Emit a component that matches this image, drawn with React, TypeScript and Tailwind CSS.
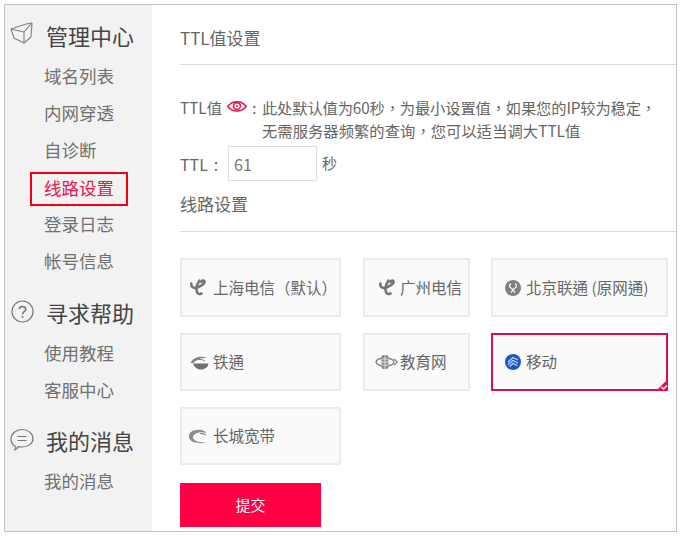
function CubeIcon() {
  return (
    <svg width="24" height="24" viewBox="0 0 24 24" fill="none" stroke="#808080" strokeWidth="1.1" strokeLinejoin="round">
      <path d="M1 7 L16 2 L22 1 L21 15 L14 21 L4 16 Z" />
      <path d="M1 7 L14 10 L22 1 M14 10 L14 21" />
    </svg>
  );
}

function HelpIcon() {
  return (
    <svg width="23" height="23" viewBox="0 0 24 24" fill="none" stroke="#777" strokeWidth="1.2">
      <circle cx="12" cy="12" r="11" />
      <path d="M8.6 9.4 C8.8 5.8 15.4 5.8 15.4 9.6 C15.4 12.2 12 12.2 12 15" strokeWidth="1.6" />
      <circle cx="12" cy="17.8" r="1" fill="#777" stroke="none" />
    </svg>
  );
}

function ChatIcon() {
  return (
    <svg width="24" height="24" viewBox="0 0 24 24" fill="none" stroke="#777" strokeWidth="1.2" strokeLinejoin="round">
      <path d="M6 20 C2.5 18 1 15 1 12 C1 6.5 6 2.5 12 2.5 C18 2.5 23 6.5 23 11.5 C23 16.5 18 20 12 20 C10.5 20 9.5 20 8.5 19.6 C7.8 21 6.5 22.5 4.5 23 C5.5 22 6 21 6 20 Z" />
      <path d="M7.5 9.5 H16.5 M7.5 13.5 H16.5" />
    </svg>
  );
}

function EyeIcon() {
  return (
    <svg width="20" height="13" viewBox="0 0 20 13" fill="none" stroke="#e8174f" className="shrink-0">
      <path d="M0.8 6.5 C5 0 15 0 19.2 6.5 C15 12.5 5 12.5 0.8 6.5 Z" strokeWidth="1.5" />
      <circle cx="10" cy="6" r="3.4" strokeWidth="1.6" />
      <circle cx="10" cy="6" r="1" fill="#e8174f" stroke="none" />
    </svg>
  );
}

function TelecomIcon() {
  return (
    <svg width="16" height="17" viewBox="0 0 16 17" fill="none" stroke="#757575" strokeLinecap="round" className="shrink-0">
      <path d="M1.3 4.5 C0.8 8.5 4 9.8 8 8.2 C12 6.6 15 4.8 14.5 2.6 C14 1 12 1.5 11.5 3" strokeWidth="2.6" />
      <path d="M9.5 1.5 C7 5 6 10 7 13 C7.5 15 9.5 15.5 11.5 14.5" strokeWidth="2.6" />
    </svg>
  );
}

function UnicomIcon() {
  return (
    <svg width="16" height="16" viewBox="0 0 16 16" fill="none" className="shrink-0">
      <circle cx="8" cy="8" r="8" fill="#808080" />
      <path d="M6 3.5 C4 5 4 7 6 8 C8 9 8 11 6 12.5 M10 3.5 C12 5 12 7 10 8 C8 9 8 11 10 12.5" stroke="#fff" strokeWidth="1.2" />
    </svg>
  );
}

function RailwayIcon() {
  return (
    <svg width="19" height="15" viewBox="0 0 19 15" fill="none" className="shrink-0">
      <path d="M0.5 8 C3 2.5 10 0 17 3 C11 2.5 6 4 3.5 8 Z" fill="#808080" />
      <path d="M3 8.5 H18.5 C18 12.5 14 14.5 10.5 14.5 C7 14.5 4.5 12 3 8.5 Z" fill="#6f6f6f" />
      <path d="M5 5.5 C8 4 12 4 15 6" stroke="#808080" strokeWidth="1" />
    </svg>
  );
}

function EduIcon() {
  return (
    <svg width="23" height="16" viewBox="0 0 23 16" fill="none" stroke="#7d7d7d" className="shrink-0">
      <ellipse cx="10" cy="8" rx="9" ry="4" strokeWidth="1.3" />
      <path d="M19 5 L22.5 8 L19 11" strokeWidth="1.2" />
      <rect x="6.5" y="1" width="7" height="14" rx="2" fill="#8a8a8a" stroke="none" />
      <path d="M2 8 H18 M6.5 5 H13.5 M6.5 11 H13.5 M10 1 V15" stroke="#f0f0f0" strokeWidth="0.8" />
    </svg>
  );
}

function MobileIcon() {
  return (
    <svg width="16" height="16" viewBox="0 0 16 16" fill="none" className="shrink-0">
      <circle cx="8" cy="8" r="8" fill="#1c54c4" />
      <path d="M3 8 L8 3.5 L13 6 M3 10.5 L8 6.5 L13 9 M4.5 12.5 L8 9.5 L12.5 11.5" stroke="#b9dcf5" strokeWidth="1.3" />
    </svg>
  );
}

function GreatWallIcon() {
  return (
    <svg width="21" height="15" viewBox="0 0 21 15" fill="none" className="shrink-0">
      <path d="M18.5 4 C15.5 0 7 0 3 3 C-0.5 6 0.5 11 5 13 C9 14.5 15 14.5 19 13.5 C13 13.5 6 13 5 8.5 C4.5 5 11 1.5 18.5 4 Z" fill="#8c8c8c" />
      <path d="M11 4.5 C14 3.5 17.5 4.5 18.5 6.5 C16 5.5 13.5 5 11 4.5 Z" fill="#6a6a6a" />
    </svg>
  );
}

function NavItem({ label, active }: { label: string; active?: boolean }) {
  return (
    <div className="h-[37px] flex items-center pl-[37px]">
      {active ? (
        <div className="-ml-[14px] translate-y-[1px] w-[98px] h-[34px] border-2 border-[#f0000f] flex items-center pl-3 text-[#e8174f]">
          {label}
        </div>
      ) : (
        <span>{label}</span>
      )}
    </div>
  );
}

function NavHead({ icon, label }: { icon: React.ReactNode; label: string }) {
  return (
    <div className="flex items-center h-[40px] text-[22px] text-[#444]">
      <div className="w-[30px] flex justify-center -translate-y-[1px]">{icon}</div>
      <span className="ml-[9px]">{label}</span>
    </div>
  );
}

function LineCard({ icon, label, className, selected }: { icon: React.ReactNode; label: string; className: string; selected?: boolean }) {
  return (
    <div
      className={`relative flex items-center bg-[#fafafa] border-2 text-[15.5px] text-[#666] font-['Noto_Sans_CJK_TC',sans-serif] ${className} ${
        selected ? "border-[#d6104c]" : "border-[#ebebeb]"
      }`}
    >
      {icon}
      <span className="whitespace-nowrap">{label}</span>
      {selected && (
        <svg width="12" height="12" viewBox="0 0 12 12" className="absolute right-[-2px] bottom-[-2px]">
          <path d="M12 0 V12 H0 Z" fill="#f0064c" />
          <path d="M5.5 8 L7.5 10 L11 6.5" stroke="#fff" strokeWidth="1.5" fill="none" />
        </svg>
      )}
    </div>
  );
}

export default function App() {
  return (
    <div className="w-[680px] h-[536px] bg-white pt-[4px] pl-[4px] overflow-hidden font-['Noto_Sans_CJK_SC','Noto_Sans',sans-serif]">
      <div className="w-[673px] h-[528px] border border-[#c4c4c4] flex overflow-hidden">
        <div className="w-[147px] shrink-0 bg-[#f2f2f2] pt-[10px] pl-[2px] text-[17.5px] text-[#707070]">
          <NavHead icon={<CubeIcon />} label="管理中心" />
          <div className="mt-[3px]">
            <NavItem label="域名列表" />
            <NavItem label="内网穿透" />
            <NavItem label="自诊断" />
            <NavItem label="线路设置" active />
            <NavItem label="登录日志" />
            <NavItem label="帐号信息" />
          </div>
          <div className="mt-[12px]">
            <NavHead icon={<HelpIcon />} label="寻求帮助" />
          </div>
          <div className="mt-[3px]">
            <NavItem label="使用教程" />
            <NavItem label="客服中心" />
          </div>
          <div className="mt-[11px]">
            <NavHead icon={<ChatIcon />} label="我的消息" />
          </div>
          <div className="mt-[3px]">
            <NavItem label="我的消息" />
          </div>
        </div>

        <div className="flex-1 pl-[28px] text-[#666]">
          <div className="h-[60px] border-b border-[#dcdcdc] pt-[19px] text-[17px] leading-[28px]">TTL值设置</div>

          <div className="mt-[31px] flex text-[15.3px] leading-[23px] font-['Noto_Sans_CJK_TC',sans-serif]">
            <div className="flex items-center h-[23px] shrink-0">
              <span>TTL值</span>
              <span className="ml-[5px] -translate-y-[1px]">
                <EyeIcon />
              </span>
              <span className="w-[15px] text-center">:</span>
            </div>
            <div className="whitespace-nowrap">
              <div className="tracking-[-0.15px]">此处默认值为60秒，为最小设置值，如果您的IP较为稳定，</div>
              <div className="tracking-[0.05px]">无需服务器频繁的查询，您可以适当调大TTL值</div>
            </div>
          </div>

          <div className="mt-[4px] flex items-center text-[15px]">
            <span className="w-[48px] text-[16px]">
              TTL<span className="ml-[6px]">:</span>
            </span>
            <div className="w-[89px] h-[35px] border border-[#dedede] flex items-center pl-[5px] text-[16px] text-[#777]">61</div>
            <span className="ml-[5px]">秒</span>
          </div>

          <div className="mt-[8px] h-[43px] border-b border-[#dcdcdc] text-[17px] leading-[30px]">线路设置</div>

          <div className="mt-[26px] flex gap-[22px]">
            <LineCard icon={<TelecomIcon />} label="上海电信（默认）" className="w-[161px] h-[59px] pl-[8px] gap-[7px]" />
            <LineCard icon={<TelecomIcon />} label="广州电信" className="w-[107px] h-[59px] pl-[14px] gap-[5px]" />
            <LineCard icon={<UnicomIcon />} label="北京联通 (原网通)" className="w-[177px] h-[59px] -ml-[1px] pl-[12px] gap-[5px]" />
          </div>
          <div className="mt-[16px] flex gap-[22px]">
            <LineCard icon={<RailwayIcon />} label="铁通" className="w-[161px] h-[58px] pl-[8px] gap-[4px]" />
            <LineCard icon={<EduIcon />} label="教育网" className="w-[107px] h-[58px] pl-[10px] gap-[2px]" />
            <LineCard icon={<MobileIcon />} label="移动" className="w-[177px] h-[58px] -ml-[1px] pl-[12px] gap-[5px]" selected />
          </div>
          <div className="mt-[16px]">
            <LineCard icon={<GreatWallIcon />} label="长城宽带" className="w-[161px] h-[58px] pl-[6px] gap-[4px]" />
          </div>

          <div className="mt-[18px] w-[141px] h-[44px] bg-[#ff0044] flex items-center justify-center text-[15px] text-white">
            提交
          </div>
        </div>
      </div>
    </div>
  );
}
